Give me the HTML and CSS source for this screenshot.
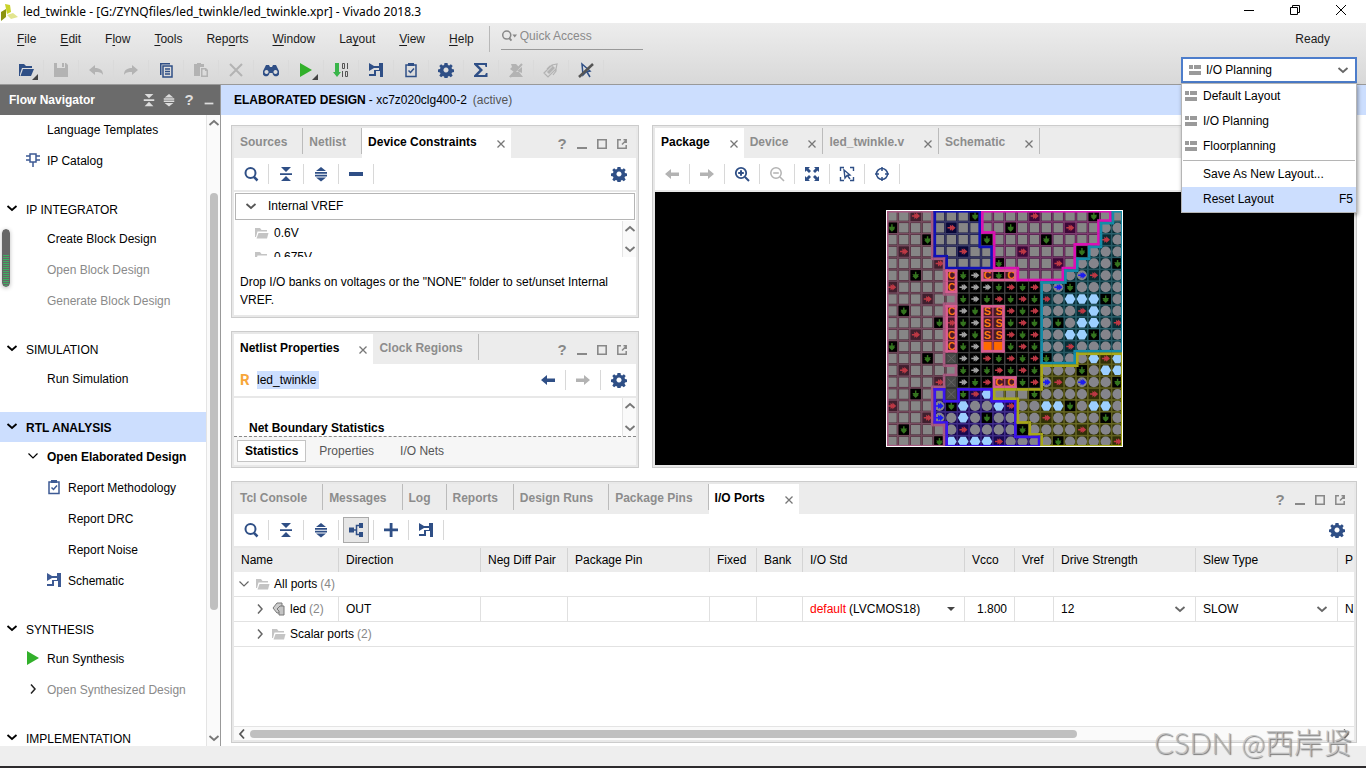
FILE: index.html
```html
<!DOCTYPE html>
<html lang="en">
<head>
<meta charset="utf-8">
<title>led_twinkle - Vivado 2018.3</title>
<link rel="stylesheet" href="styles.css">
</head>
<body>
<svg class="sprite" aria-hidden="true">
  <symbol id="open" viewBox="0 0 16 16"><path d="M1 2h5l2 2h6v2H4L2 12V14H1z"/><path d="M5 7h11l-3 7H2.500z"/></symbol>
  <symbol id="folder" viewBox="0 0 16 16"><path d="M1 3h5l1.500 2H13v1.500H3.500L2 12H1z"/><path d="M4.500 8h10L13 13.500H2.500z"/></symbol>
  <symbol id="save" viewBox="0 0 16 16"><path d="M1 1h3v5h8V1h1l2 2v12H1zM9 1h2v4H9z"/></symbol>
  <symbol id="undo" viewBox="0 0 16 16"><path d="M1 8l6-5v3c5 0 8 2 8 7-2-3-4-3-8-3v3z"/></symbol>
  <symbol id="redo" viewBox="0 0 16 16"><path d="M15 8L9 3v3c-5 0-8 2-8 7 2-3 4-3 8-3v3z"/></symbol>
  <symbol id="copy" viewBox="0 0 16 16"><path d="M2 1h10v1.500H3.500V13H2z"/><path fill="none" stroke="currentColor" stroke-width="1.500" d="M5 4h9v11H5zM7 7h5M7 9.500h5M7 12h5"/></symbol>
  <symbol id="paste" viewBox="0 0 16 16"><path d="M1 2h3V1h4v1h3v3H7v9H1z"/><path d="M8 6h5l2 2v7H8zM9.500 7.500v6h4V9H12V7.500z" fill-rule="evenodd"/></symbol>
  <symbol id="cross" viewBox="0 0 16 16"><path fill="none" stroke="currentColor" stroke-width="2" d="M2 2l12 12M14 2L2 14"/></symbol>
  <symbol id="find" viewBox="0 0 16 16"><path fill-rule="evenodd" d="M3 3h3l1 2h2l1-2h3l3 6a3.500 3.500 0 1 1-6.500 2h-3A3.500 3.500 0 1 1 0 9zM3.500 8a2 2 0 1 0 .01 0zM12.500 8a2 2 0 1 0 .01 0z"/></symbol>
  <symbol id="play" viewBox="0 0 16 16"><path d="M2 1l12 7-12 7z"/></symbol>
  <symbol id="bits" viewBox="0 0 16 16"><path fill="#39b54a" d="M2 1h4v9h2l-4 5-4-5h2z"/><path fill="none" stroke="#555" d="M9.500 1.500h2v5h-2zM14.500 1v6M9.500 9v6M12.500 9.500h2v5h-2z"/></symbol>
  <symbol id="schem" viewBox="0 0 16 16"><path d="M1 1l5 3h5V1h4v14h-3V9H8v5H1v-2h5V8h5V6H6L1 9z"/></symbol>
  <symbol id="clip" viewBox="0 0 16 16"><path fill="none" stroke="currentColor" stroke-width="1.500" d="M3 3h10v11.500H3zM5.500 8.500l2 2 3.500-4"/><path d="M5 1h6v3H5z"/></symbol>
  <symbol id="gear" viewBox="0 0 16 16"><path fill-rule="evenodd" d="M6.500 1h3l.4 2 1.300.500 1.700-1.200 1.800 1.800-1.200 1.700.5 1.300 2 .4v2.500l-2 .5-.5 1.300 1.200 1.700-1.900 1.800-1.700-1.200-1.200.5-.4 1.900h-3l-.4-2-1.300-.500-1.700 1.200-1.800-1.800 1.200-1.700-.5-1.200-2-.5V7.500l2-.5.5-1.200-1.200-1.700 1.800-1.800 1.700 1.200 1.300-.5zM8 5.500a2.500 2.500 0 1 0 .01 0z"/></symbol>
  <symbol id="sigma" viewBox="0 0 16 16"><path d="M1 1h13v4h-1.500L12 3H5l5 5-5 5h7l1-2h1.500v4H1v-1.500L6.500 8 1 2.500z"/></symbol>
  <symbol id="nomark" viewBox="0 0 16 16"><path d="M3 2h5l3 3-5 5-4-3 2-2zM1 15l5-5h5l4 5zM9 9l5-4v6z"/><path stroke="currentColor" stroke-width="2" d="M2 15L14 2"/></symbol>
  <symbol id="noroute" viewBox="0 0 16 16"><path fill="none" stroke="currentColor" stroke-width="1.200" d="M1 11l8-8 5-1-1 5-8 8zM4 7l3-3h3M10 13l3-4v-2"/><path stroke="currentColor" stroke-width="3" d="M5 11l6-6"/></symbol>
  <symbol id="noselect" viewBox="0 0 16 16"><path fill="none" stroke="currentColor" stroke-width="1.500" d="M4 2l8 7-4 1-3 3zM9 10l3 5"/><path stroke="#555" stroke-width="2.500" d="M1 15L15 2"/></symbol>
  <symbol id="search" viewBox="0 0 16 16"><circle cx="7.500" cy="7" r="5" fill="none" stroke="currentColor" stroke-width="2"/><path stroke="currentColor" stroke-width="2.500" d="M11 11l3.500 3.500"/></symbol>
  <symbol id="collapse" viewBox="0 0 16 16"><path d="M3 1h10L8 6zM2 7.200h12v1.800H2zM8 10l5 5H3z"/></symbol>
  <symbol id="expand" viewBox="0 0 16 16"><path d="M8 1l5 4H3zM2 6h12v1.700H2zM2 8.700h12v1.700H2zM3 11.500h10l-5 4z"/></symbol>
  <symbol id="minus" viewBox="0 0 16 16"><path d="M1 6h14v4H1z"/></symbol>
  <symbol id="plus" viewBox="0 0 16 16"><path d="M6.700 1h2.800v5.500H15v2.800H9.500V15H6.700V9.300H1V6.500h5.700z"/></symbol>
  <symbol id="left" viewBox="0 0 16 16"><path d="M1 8l6-5v3.500h8v3.500H7v3z"/></symbol>
  <symbol id="right" viewBox="0 0 16 16"><path d="M15 8L9 3v3.500H1V10h8v3z"/></symbol>
  <symbol id="zin" viewBox="0 0 16 16"><circle cx="7" cy="7" r="5.200" fill="none" stroke="currentColor" stroke-width="1.800"/><path stroke="currentColor" stroke-width="2" d="M11 11l4 4M7 4.200v5.600M4.200 7h5.600"/></symbol>
  <symbol id="zout" viewBox="0 0 16 16"><circle cx="7" cy="7" r="5.200" fill="none" stroke="currentColor" stroke-width="1.500"/><path stroke="currentColor" stroke-width="1.600" d="M11 11l4 4M4.200 7h5.600"/></symbol>
  <symbol id="fit" viewBox="0 0 16 16"><path d="M1 1h5L4.500 2.500 7 5 5 7 2.500 4.500 1 6zM15 1v5l-1.500-1.500L11 7 9 5l2.500-2.500L10 1zM1 15v-5l1.500 1.500L5 9l2 2-2.500 2.500L6 15zM15 15h-5l1.500-1.500L9 11l2-2 2.500 2.500L15 10z"/></symbol>
  <symbol id="zsel" viewBox="0 0 16 16"><path fill="none" stroke="currentColor" stroke-width="1.400" d="M1.500 5V1.500H5M11 1.500h3.500V5M14.500 11v3.500H11M5 14.500H1.500V11M5 4l6 5-3 .5L6 12zM8 9l3 4"/></symbol>
  <symbol id="target" viewBox="0 0 16 16"><circle cx="8" cy="8" r="5.500" fill="none" stroke="currentColor" stroke-width="1.500"/><path stroke="currentColor" stroke-width="1.500" d="M8 1v4M8 11v4M1 8h4M11 8h4"/></symbol>
  <symbol id="tree" viewBox="0 0 16 16"><path d="M1 5.500h5v5H1zM11 1h4v5h-4zM11 10h4v5h-4z"/><path fill="none" stroke="currentColor" stroke-width="1.500" d="M8.500 8V3.500H11M8.500 8v4.500H11M6 8h2.500"/></symbol>
  <symbol id="chip" viewBox="0 0 16 16"><path fill="none" stroke="currentColor" stroke-width="1.500" d="M5 2h6v8H5zM1 4h4M1 8h4M11 4h4M11 8h4M8 10v5"/></symbol>
  <symbol id="down" viewBox="0 0 16 16"><path fill="none" stroke="currentColor" stroke-width="1.800" d="M3.500 6L8 10l4.500-4"/></symbol>
  <symbol id="thin" viewBox="0 0 16 16"><path fill="none" stroke="currentColor" stroke-width="1.200" d="M3.500 5.500L8 10l4.500-4.500"/></symbol>
  <symbol id="up" viewBox="0 0 16 16"><path fill="none" stroke="currentColor" stroke-width="1.800" d="M3.500 10L8 6l4.500 4"/></symbol>
  <symbol id="next" viewBox="0 0 16 16"><path fill="none" stroke="currentColor" stroke-width="1.500" d="M6 3.500L10 8l-4 4.500"/></symbol>
  <symbol id="prev" viewBox="0 0 16 16"><path fill="none" stroke="currentColor" stroke-width="1.800" d="M10 3.500L6 8l4 4.500"/></symbol>
  <symbol id="close" viewBox="0 0 16 16"><path fill="none" stroke="currentColor" stroke-width="1.300" d="M4.500 4.500l7 7M11.500 4.500l-7 7"/></symbol>
  <symbol id="min" viewBox="0 0 16 16"><path d="M3 11h10v2H3z"/></symbol>
  <symbol id="max" viewBox="0 0 16 16"><path fill="none" stroke="currentColor" stroke-width="1.600" d="M3.800 3.800h8.400v8.400H3.800z"/></symbol>
  <symbol id="pop" viewBox="0 0 16 16"><path fill="none" stroke="currentColor" stroke-width="1.500" d="M7 3.800H3.800v8.400h8.400V9M8 8.500L12 4.500M9.500 3.800h2.700V7"/></symbol>
  <symbol id="layout" viewBox="0 0 16 16"><path d="M2 3h4v4H2zM7 3h7v4H7zM2 9h12v4H2z"/></symbol>
  <symbol id="port" viewBox="0 0 16 16"><path fill="#ccc" stroke="#777" d="M2 7l4-5h5v10H6z"/><path fill="#c4c4c4" stroke="#777" d="M6 8l3-3h4v9H8V10z"/></symbol>
</svg>

<div class="app">
  <header class="title">
    <svg class="logo" viewBox="0 0 18 18"><path fill="#c9d22a" d="M5 1l5 1 1 7-4 2z"/><path fill="#8c9410" d="M1 9l5-3v8l-5 4z"/><path fill="#e2e58f" d="M7 12l6-2 5 4-7 2z"/></svg>
    <h1>led_twinkle - [G:/ZYNQfiles/led_twinkle/led_twinkle.xpr] - Vivado 2018.3</h1>
    <div class="wincontrols">
      <button aria-label="Minimize"><svg viewBox="0 0 16 16"><path d="M3 8.500h10"/></svg></button>
      <button aria-label="Restore"><svg viewBox="0 0 16 16"><path d="M3.500 5.500h7v7h-7zM5.500 5.500v-2h7v7h-2"/></svg></button>
      <button aria-label="Close"><svg viewBox="0 0 16 16"><path d="M3 3l10 10M13 3L3 13"/></svg></button>
    </div>
  </header>

  <div class="ribbon">
    <div class="menurow">
      <nav class="menubar">
        <button><u>F</u>ile</button><button><u>E</u>dit</button><button>F<u>l</u>ow</button><button><u>T</u>ools</button><button>Rep<u>o</u>rts</button><button><u>W</u>indow</button><button>La<u>y</u>out</button><button><u>V</u>iew</button><button><u>H</u>elp</button>
      </nav>
      <label class="quick"><svg viewBox="0 0 20 16"><circle cx="6" cy="7.500" r="4.300" fill="none" stroke="#888" stroke-width="1.600"/><path stroke="#888" stroke-width="2" d="M8.500 10.500l2.500 3"/><path fill="#888" d="M12 7h5l-2.500 3z"/></svg><input type="text" placeholder="Quick Access" aria-label="Quick Access"></label>
      <span class="ready">Ready</span>
    </div>
    <div class="toolrow">
      <button class="more" aria-label="Open"><svg><use href="#open"/></svg></button>
      <button disabled aria-label="Save"><svg><use href="#save"/></svg></button>
      <button disabled aria-label="Undo"><svg><use href="#undo"/></svg></button>
      <button disabled aria-label="Redo"><svg><use href="#redo"/></svg></button>
      <button aria-label="Copy"><svg><use href="#copy"/></svg></button>
      <button disabled aria-label="Paste"><svg><use href="#paste"/></svg></button>
      <button disabled aria-label="Delete"><svg><use href="#cross"/></svg></button>
      <button aria-label="Find"><svg><use href="#find"/></svg></button>
      <button class="more go" aria-label="Run"><svg><use href="#play"/></svg></button>
      <button aria-label="Generate Bitstream"><svg><use href="#bits"/></svg></button>
      <button aria-label="Schematic"><svg><use href="#schem"/></svg></button>
      <button aria-label="Report"><svg><use href="#clip"/></svg></button>
      <button aria-label="Settings"><svg><use href="#gear"/></svg></button>
      <button aria-label="Summary"><svg><use href="#sigma"/></svg></button>
      <button disabled aria-label="Unmark"><svg><use href="#nomark"/></svg></button>
      <button disabled aria-label="Unroute"><svg><use href="#noroute"/></svg></button>
      <button aria-label="Unselect"><svg><use href="#noselect"/></svg></button>
      <div class="combo">
        <svg><use href="#layout"/></svg>
        <select aria-label="Layout"><option>I/O Planning</option><option>Default Layout</option><option>Floorplanning</option></select>
        <svg><use href="#down"/></svg>
        <div class="menu">
          <button><svg><use href="#layout"/></svg>Default Layout</button>
          <button><svg><use href="#layout"/></svg>I/O Planning</button>
          <button><svg><use href="#layout"/></svg>Floorplanning</button>
          <hr>
          <button><svg></svg>Save As New Layout...</button>
          <button class="hot"><svg></svg>Reset Layout<kbd>F5</kbd></button>
        </div>
      </div>
    </div>
  </div>

  <div class="work">
    <aside class="flow">
      <div class="flowhead"><h2>Flow Navigator</h2>
        <div class="ctl"><button aria-label="Collapse all"><svg><use href="#collapse"/></svg></button><button aria-label="Expand all"><svg><use href="#expand"/></svg></button><button aria-label="Help">?</button><button aria-label="Minimize"><svg><use href="#min"/></svg></button></div>
      </div>
      <div class="flowbody">
        <nav class="steps">
          <section>
            <button class="i1">Language Templates</button>
            <button class="i1"><svg class="blue"><use href="#chip"/></svg>IP Catalog</button>
          </section>
          <section>
            <h3><svg><use href="#down"/></svg>IP INTEGRATOR</h3>
            <button class="i1">Create Block Design</button>
            <button class="i1" disabled>Open Block Design</button>
            <button class="i1" disabled>Generate Block Design</button>
          </section>
          <section>
            <h3><svg><use href="#down"/></svg>SIMULATION</h3>
            <button class="i1">Run Simulation</button>
          </section>
          <section>
            <h3 class="current"><svg><use href="#down"/></svg>RTL ANALYSIS</h3>
            <button class="i1 strong"><svg><use href="#thin"/></svg>Open Elaborated Design</button>
            <button class="i2"><svg class="blue"><use href="#clip"/></svg>Report Methodology</button>
            <button class="i2">Report DRC</button>
            <button class="i2">Report Noise</button>
            <button class="i2"><svg class="blue"><use href="#schem"/></svg>Schematic</button>
          </section>
          <section>
            <h3><svg><use href="#down"/></svg>SYNTHESIS</h3>
            <button class="i1"><svg class="green"><use href="#play"/></svg>Run Synthesis</button>
            <button class="i1" disabled><svg class="dark"><use href="#next"/></svg>Open Synthesized Design</button>
          </section>
          <section>
            <h3><svg><use href="#down"/></svg>IMPLEMENTATION</h3>
          </section>
        </nav>
        <div class="vbar"><svg><use href="#up"/></svg><i></i><svg><use href="#down"/></svg></div>
        <div class="meter"></div>
      </div>
    </aside>

    <main>
      <div class="designbar"><h2>ELABORATED DESIGN</h2><span>- xc7z020clg400-2</span><em>(active)</em></div>
      <div class="panes">
        <div class="toppanes">
          <div class="leftpanes">
            <section class="pane grow">
              <div class="tabs">
                <button>Sources</button><button>Netlist</button><button class="on">Device Constraints<svg><use href="#close"/></svg></button>
                <div class="ctl"><button aria-label="Help">?</button><button aria-label="Minimize"><svg><use href="#min"/></svg></button><button aria-label="Maximize"><svg><use href="#max"/></svg></button><button aria-label="Float"><svg><use href="#pop"/></svg></button></div>
              </div>
              <div class="tools">
                <button aria-label="Search"><svg><use href="#search"/></svg></button><button aria-label="Collapse all"><svg><use href="#collapse"/></svg></button><button aria-label="Expand all"><svg><use href="#expand"/></svg></button><button aria-label="Remove"><svg><use href="#minus"/></svg></button>
                <button class="end" aria-label="Settings"><svg><use href="#gear"/></svg></button>
              </div>
              <button class="vref"><svg><use href="#down"/></svg>Internal VREF</button>
              <div class="scroller volts">
                <ul><li><svg><use href="#folder"/></svg>0.6V</li><li><svg><use href="#folder"/></svg>0.675V</li></ul>
                <div class="vbar"><svg><use href="#up"/></svg><svg><use href="#down"/></svg></div>
              </div>
              <p>Drop I/O banks on voltages or the "NONE" folder to set/unset Internal VREF.</p>
            </section>
            <section class="pane">
              <div class="tabs">
                <button class="on">Netlist Properties<svg><use href="#close"/></svg></button><button>Clock Regions</button>
                <div class="ctl"><button aria-label="Help">?</button><button aria-label="Minimize"><svg><use href="#min"/></svg></button><button aria-label="Maximize"><svg><use href="#max"/></svg></button><button aria-label="Float"><svg><use href="#pop"/></svg></button></div>
              </div>
              <div class="tools">
                <b class="rtl">R</b><mark>led_twinkle</mark>
                <button class="end" aria-label="Back"><svg><use href="#left"/></svg></button><button disabled aria-label="Forward"><svg><use href="#right"/></svg></button><button aria-label="Settings"><svg><use href="#gear"/></svg></button>
              </div>
              <div class="scroller stats">
                <h3>Net Boundary Statistics</h3>
                <div class="vbar"><svg><use href="#up"/></svg><svg><use href="#down"/></svg></div>
              </div>
              <div class="subtabs"><button class="on">Statistics</button><button>Properties</button><button>I/O Nets</button></div>
            </section>
          </div>
          <section class="pane">
            <div class="tabs">
              <button class="on">Package<svg><use href="#close"/></svg></button><button>Device<svg><use href="#close"/></svg></button><button>led_twinkle.v<svg><use href="#close"/></svg></button><button>Schematic<svg><use href="#close"/></svg></button>
            </div>
            <div class="tools">
              <button disabled aria-label="Back"><svg><use href="#left"/></svg></button><button disabled aria-label="Forward"><svg><use href="#right"/></svg></button><button aria-label="Zoom in"><svg><use href="#zin"/></svg></button><button disabled aria-label="Zoom out"><svg><use href="#zout"/></svg></button><button aria-label="Zoom fit"><svg><use href="#fit"/></svg></button><button aria-label="Zoom to selection"><svg><use href="#zsel"/></svg></button><button aria-label="Autofit"><svg><use href="#target"/></svg></button>
            </div>
            <div class="canvas"><svg id="package" viewBox="0 0 20 20" role="img" aria-label="Package pin map"></svg></div>
          </section>
        </div>

        <section class="pane">
          <div class="tabs">
            <button>Tcl Console</button><button>Messages</button><button>Log</button><button>Reports</button><button>Design Runs</button><button>Package Pins</button><button class="on">I/O Ports<svg><use href="#close"/></svg></button>
            <div class="ctl"><button aria-label="Help">?</button><button aria-label="Minimize"><svg><use href="#min"/></svg></button><button aria-label="Maximize"><svg><use href="#max"/></svg></button><button aria-label="Float"><svg><use href="#pop"/></svg></button></div>
          </div>
          <div class="tools">
            <button aria-label="Search"><svg><use href="#search"/></svg></button><button aria-label="Collapse all"><svg><use href="#collapse"/></svg></button><button aria-label="Expand all"><svg><use href="#expand"/></svg></button><button class="pressed" aria-label="Group by interface"><svg><use href="#tree"/></svg></button><button aria-label="Add"><svg><use href="#plus"/></svg></button><button aria-label="Schematic"><svg><use href="#schem"/></svg></button>
            <button class="end" aria-label="Settings"><svg><use href="#gear"/></svg></button>
          </div>
          <div class="ports">
            <table>
              <colgroup><col class="w-name"><col class="w-wide"><col class="w-neg"><col class="w-wide"><col class="w-fixed"><col class="w-bank"><col class="w-std"><col class="w-vcco"><col class="w-vref"><col class="w-wide"><col class="w-wide"><col class="w-wide"></colgroup>
              <thead><tr><th>Name</th><th>Direction</th><th>Neg Diff Pair</th><th>Package Pin</th><th>Fixed</th><th>Bank</th><th>I/O Std</th><th>Vcco</th><th>Vref</th><th>Drive Strength</th><th>Slew Type</th><th>P</th></tr></thead>
              <tbody>
                <tr class="group"><td colspan="12"><div class="cell"><svg><use href="#thin"/></svg><svg class="pale"><use href="#folder"/></svg>All ports <small>(4)</small></div></td></tr>
                <tr><td><div class="cell sub"><svg><use href="#next"/></svg><svg><use href="#port"/></svg>led <small>(2)</small></div></td><td>OUT</td><td></td><td></td><td></td><td></td><td><button class="std"><span>default</span> (LVCMOS18)<i></i></button></td><td class="num">1.800</td><td></td>
                  <td><div class="pick"><select aria-label="Drive Strength"><option>12</option></select><svg><use href="#down"/></svg></div></td><td><div class="pick"><select aria-label="Slew Type"><option>SLOW</option></select><svg><use href="#down"/></svg></div></td><td>N</td></tr>
                <tr class="group"><td colspan="12"><div class="cell sub"><svg><use href="#next"/></svg><svg class="pale"><use href="#folder"/></svg>Scalar ports <small>(2)</small></div></td></tr>
              </tbody>
            </table>
          </div>
          <div class="hbar"><svg><use href="#prev"/></svg><div><i></i></div><svg><use href="#next"/></svg></div>
        </section>
      </div>
    </main>
  </div>
  <footer class="status"></footer>
  <div class="watermark">CSDN @西岸贤</div>
</div>
<script src="package.js"></script>
</body>
</html>
```

FILE: styles.css
```css
* { box-sizing: border-box; }
body { margin: 0; color: #000; background: #fff; font: 12px/16px "Liberation Sans", Arial, sans-serif; }
button, input, select { font: inherit; color: inherit; background: none; border: 0; padding: 0; margin: 0; border-radius: 0; text-align: left; white-space: nowrap; }
h1, h2, h3, p, ul { margin: 0; padding: 0; font-size: 12px; list-style: none; }
svg { width: 16px; height: 16px; fill: currentColor; flex: none; display: block; }
.sprite { position: absolute; width: 0; height: 0; }

.app { height: 100vh; display: flex; flex-direction: column; position: relative; overflow: hidden; border-bottom: 2px solid #2d2b2d; }

.title { display: flex; align-items: center; height: 23px; background: #fff; flex: none; }
.title .logo { width: 18px; height: 18px; }
.title h1 { font: 12px/22px "Noto Sans", "Open Sans", sans-serif; padding-left: 5px; flex: 1; }
.wincontrols { display: flex; padding-right: 2px; }
.wincontrols button { width: 46px; display: flex; justify-content: center; padding-bottom: 3px; }
.wincontrols svg { fill: none; stroke: #000; }

.ribbon { background: linear-gradient(#ededed, #d8d8d8); border-bottom: 1px solid #999; height: 62px; flex: none; color: #1b1b1b; }
.menurow { display: flex; height: 32px; align-items: center; }
.menubar { display: flex; gap: 24px; padding: 0 15px 0 17px; height: 26px; align-items: center; border-right: 1px solid #b8b8b8; }
.menubar u { text-underline-offset: 2px; }
.quick { display: flex; align-items: center; width: 142px; height: 23px; margin-left: 11px; margin-bottom: 2px; border-bottom: 1px solid #999; padding-bottom: 4px; }
.quick svg { width: 19px; height: 15px; }
.quick input { flex: 1; min-width: 0; outline: 0; }
.quick input::placeholder { color: #8a8a8a; opacity: 1; }
.ready { margin-left: auto; padding-right: 36px; }
.toolrow { display: flex; height: 29px; align-items: center; padding: 0 9px; color: #2f4f86; }
.toolrow > button { width: 35px; height: 20px; display: flex; align-items: center; justify-content: center; border-right: 1px solid #dadada; position: relative; }
button:disabled, .toolrow > button:disabled { color: #b3b3b3; }
.toolrow > .go { color: #32b02b; }
.more::after { content: ""; position: absolute; right: 5px; bottom: 0; border: 3px solid; border-color: transparent #444 #444 transparent; }
.combo { margin-left: auto; width: 176px; height: 26px; display: flex; align-items: center; border: 2px solid #4d7dcb; background: #fff; position: relative; padding: 0 4px; color: #9a9a9a; z-index: 5; }
.combo > svg:last-of-type { color: #666; }
.combo select { appearance: none; flex: 1; height: 20px; color: #000; padding-left: 3px; outline: 0; }
.menu { position: absolute; left: -2px; right: -2px; top: 24px; background: #fff; border: 1px solid #b5b5b5; box-shadow: 1px 2px 4px #0006; color: #000; }
.menu button { display: flex; align-items: center; width: 100%; height: 25px; padding: 0 3px 0 1px; gap: 4px; }
.menu svg { color: #9a9a9a; }
.menu hr { margin: 1px 1px; border: 0; border-top: 1px solid #b5b5b5; }
.menu .hot { background: #ccdefe; }
.menu kbd { margin-left: auto; font: inherit; }

.work { flex: 1; min-height: 0; display: flex; }
.flow { width: 221px; flex: none; border-right: 1px solid #999; display: flex; flex-direction: column; }
.flowhead { height: 30px; flex: none; background: #6b6b6b; color: #fff; display: flex; align-items: center; padding-left: 9px; }
.ctl { margin-left: auto; display: flex; align-items: center; color: #888; padding-right: 4px; }
.ctl button { width: 20px; display: flex; justify-content: center; font: bold 15px/16px "Liberation Sans", Arial, sans-serif; }
.flowhead .ctl { color: #ddd; padding-right: 1px; }
.flowhead .ctl svg { width: 14px; height: 14px; }
.flowbody { flex: 1; min-height: 0; display: flex; position: relative; }
.steps { flex: 1; overflow: hidden; }
.steps section { margin-bottom: 17px; }
.steps h3 { display: flex; align-items: center; height: 30px; gap: 6px; padding: 2px 0 0 4px; font-weight: normal; }
.steps h3 svg { margin-bottom: 5px; }
.steps .current { background: #ccdefe; font-weight: bold; }
.steps button { display: flex; align-items: center; height: 31px; width: 100%; padding: 0 0 2px 47px; }
.steps .i2 { padding-left: 68px; }
.steps .strong { font-weight: bold; }
.steps button:disabled { color: #8a8a8a; }
.steps button svg { margin: 0 6px 2px -22px; }
.blue { color: #3d5a94; }
.green { color: #32b02b; }
.dark { color: #222; }
.vbar { width: 14px; flex: none; display: flex; flex-direction: column; justify-content: space-between; align-items: center; background: #fafafa; border-left: 1px solid #e4e4e4; color: #777; }
.flow .vbar i { width: 8px; flex: none; height: 66%; border-radius: 4px; background: #c0c0c0; margin-bottom: 58px; }
.meter { position: absolute; left: 2px; top: 114px; width: 8px; height: 58px; border: 1px solid #666; border-radius: 4px; background: linear-gradient(#666 24px, transparent 24px), repeating-linear-gradient(#666 0 1px, #3fae63 1px 2px); box-shadow: 0 1px 4px #0004; }

main { flex: 1; min-width: 0; display: flex; flex-direction: column; }
.designbar { height: 30px; flex: none; background: #ccdefe; display: flex; align-items: center; padding-left: 13px; gap: 3px; }
.designbar h2 { font-size: 12px; }
.designbar em { font-style: normal; color: #555; margin-left: 3px; }
.panes { flex: 1; min-height: 0; padding: 10px 9px 3px 10px; display: grid; gap: 13px; grid-template-rows: minmax(0, 343fr) minmax(0, 262fr); grid-template-columns: minmax(0, 1fr); }
.toppanes { display: grid; gap: 13px; grid-template-columns: minmax(0, 408fr) minmax(0, 705fr); min-height: 0; }
.leftpanes { display: flex; flex-direction: column; gap: 13px; min-height: 0; }
.pane { border: 1px solid #ccc; box-shadow: inset 0 0 0 2px #e8e8e8; padding: 2px; display: flex; flex-direction: column; min-height: 0; min-width: 0; }
.grow { flex: 1; }
.tabs { display: flex; align-items: flex-start; background: #ececec; height: 30px; flex: none; color: #8c8c8c; font-weight: bold; }
.tabs > button { height: 26px; padding: 1px 15px 0 6px; border-right: 1px solid #bbb; display: flex; align-items: center; }
.tabs > button svg { margin: 4px -13px 0 16px; color: #777; }
.tabs > .on { height: 30px; background: #fff; color: #000; border: 0; padding: 0 15px 3px 6px; }
.tabs .ctl { height: 32px; }
.tools { display: flex; align-items: center; height: 34px; flex: none; border-bottom: 2px solid #e8e8e8; color: #2f4f86; }
.tools button { width: 35px; height: 20px; display: flex; align-items: center; justify-content: center; border-right: 1px solid #d8d8d8; }
.rtl ~ button:last-child, .tools .end:last-child { border-right: 0; }
.tools .end { margin-left: auto; }
.tools .pressed svg { background: #e6e6e6; outline: 1px solid #aaa; padding: 4px; width: 24px; height: 24px; }
.rtl { color: #f7a63a; font: bold 15px/16px Roboto, sans-serif; width: 23px; padding-left: 6px; }
.tools mark { background: #ccdefe; color: #000; line-height: 18px; padding-right: 3px; }
.vref { display: flex; align-items: center; gap: 9px; height: 27px; flex: none; margin: 1px; padding: 0 0 2px 7px; border: 1px solid #b5b5b5; }
.vref svg { color: #555; }
.scroller { display: flex; overflow: hidden; flex: none; }
.scroller ul { flex: 1; }
.scroller li { display: flex; align-items: center; height: 24px; gap: 4px; padding-left: 20px; }
.scroller li svg { color: #c4c4c4; }
.volts { height: 36px; }
.pane p { padding: 16px 18px 7px 6px; line-height: 18px; }
.stats { height: 38px; }
.stats h3 { flex: 1; padding: 22px 0 0 15px; }
.subtabs { display: flex; align-items: center; gap: 1px; height: 29px; flex: none; border-top: 1px dashed #888; background: #f6f6f6; padding: 0 3px 1px; color: #555; }
.subtabs button { height: 22px; padding: 0 12px; }
.subtabs .on { border: 1px solid #c4c4c4; background: #fff; color: #000; font-weight: bold; padding: 0 7px; }
.subtabs button:last-child { padding-left: 13px; }
.canvas { flex: 1; min-height: 0; background: #000; display: flex; justify-content: center; align-items: center; }
#package { height: 87%; width: auto; aspect-ratio: 1; outline: 1px solid #fff; outline-offset: -1px; }
.ports { flex: 1; min-height: 0; overflow: hidden; }
table { border-collapse: separate; border-spacing: 0; table-layout: fixed; width: 1246px; }
th, td { font-weight: normal; text-align: left; padding: 0 7px; border-right: 1px solid #e0e0e0; overflow: hidden; white-space: nowrap; }
th { background: #ececec; height: 24px; border-color: #d4d4d4; padding-right: 0; }
td { height: 25px; border-bottom: 1px solid #e2e2e2; }
.group td, td:first-child { padding-left: 0; padding-right: 0; }
.num { text-align: right; }
.w-name { width: 105px; } .w-wide { width: 142px; } .w-neg { width: 87px; } .w-fixed { width: 47px; } .w-bank { width: 46px; } .w-std { width: 162px; } .w-vcco { width: 50px; } .w-vref { width: 39px; }
.cell { display: flex; align-items: center; gap: 3px; padding-left: 2px; }
.cell svg { color: #666; }
.cell .pale { color: #c4c4c4; }
.sub { padding-left: 18px; }
small { font-size: 12px; color: #888; }
.std { width: 100%; display: flex; align-items: center; gap: 3px; }
.std span { color: #f00; }
.std i { margin-left: auto; border: 4px solid transparent; border-top-color: #444; border-bottom: 0; margin-right: 2px; }
.pick { display: flex; align-items: center; }
.pick select { appearance: none; flex: 1; }
.pick svg { color: #666; }
.hbar { height: 14px; flex: none; display: flex; align-items: center; background: #fafafa; border-top: 1px solid #e4e4e4; color: #555; }
.hbar div { flex: 1; }
.hbar i { display: block; width: 76%; height: 8px; border-radius: 4px; background: #c0c0c0; }
.status { height: 20px; flex: none; background: #eee; }
.watermark { position: absolute; right: 14px; bottom: 3px; font: 300 29px/40px Lato, "Noto Sans CJK SC", sans-serif; color: #bbbc; text-shadow: 1px 1px 1px #777; }
```

FILE: package.js
```js
// One character per pin: g pad, o ball, h clock pin, G ground, R supply, W aux, b VREF, X unbonded, C/S/O config.
const pins = [
  'ggRggggGggggRggggGgg', 'GggggRggggGggggRggoo', 'gggGggggGggggGggggRo', 'gRggggRggggRggggGooo',
  'ggggRggggGggggRgoooG', 'ggGggCGWCGCggggobRoo', 'RggggCWWWGRGRobGoooo', 'gggRggGWGRGRGRohhhGo',
  'gGgggCWGSSRGRoooRhoo', 'ggggGRGWSSGRGoGohhoR', 'ggRggCWGSSRGRoohhGoo', 'GggggCGWOOGRGooRoooo',
  'gggGgXWWRGRGRGooohRh', 'gRggggGWGRGRGoooGohh', 'ggggRXWGRCCGRbRobooG', 'ggGggXGRhgggGooooRoo',
  'RgggbGhoohRoohhGohho', 'gggRbohoGooooRooooGo', 'gGgggoRooooGooooRooo', 'ggggGhhhhRooooGooooR'
];
// I/O bank of each pin; K belongs to no bank.
const banks = [
  'LLLLBBBBMMMMMMMMMMMT', 'LLLLBBBBMMMMMMMMMMTT', 'LLLLBBBBKMMMMMMMMMTT', 'LLLLBBBBBMMMMMMMKTTT',
  'LLLLLBBBBMMMMMMMTTTT', 'LLLLLPKKPPPMMMMTTTTT', 'LLLLLPKKKKKKKTTTTTTT', 'LLLLLLKKKKKKKTTTTTTT',
  'LLLLLPKKPPKKKTTTTTTT', 'LLLLLPKKPPKKKTTTTTTT', 'LLLLLPKKPPKKKTTTTTTT', 'LLLLLPKKPPKKKTTTTTTT',
  'LLLLLKKKKKKKKTTTYYYY', 'LLLLLLKKKKKKKYYYYYYY', 'LLLLLKKKKPPKKYYYYYYY', 'LLLLVKVVVYYYYYYYYYYY',
  'LLLLVVVVVVVYYYYYYYYY', 'LLLLVVVVVVVYYYYYYYYY', 'LLLLLVVVVVVKYYYYYYYY', 'LLLLLVVVVVVVVYYYYYYY'
];
// line, grid, cell fill
const colors = {
  L: ['#a55a80', '#7c5064', '#40202e'], B: ['#1010b8', '#404070', '#080838'], M: ['#dc10b4', '#844074', '#3c0838'],
  T: ['#148ca8', '#2c6470', '#082c34'], Y: ['#a8a818', '#6c6c24', '#303008'], V: ['#3c14f0', '#443090', '#180850'],
  P: ['#d85c90', '#a84870', '#481828'], K: ['', '#444', '#000']
};
const green = '#34741e', red = '#bc3844';
const right = c => `<path fill="${c}" d="M.18.44h.2V.25l.16.12V.22l.32.28-.32.28V.63l-.16.12V.56h-.2z"/>`;
const letter = c => `<text x=".53" y=".82" text-anchor="middle">${c}</text>`;
const glyph = {
  g: '<path fill="#868686" d="M.1.1h.8v.8H.1z"/>',
  o: '<circle cx=".5" cy=".5" r=".43" fill="#85858c"/>',
  h: '<path fill="#9ccfff" d="M.28.1h.44L.95.5.72.9H.28L.05.5z"/>',
  G: `<path fill="#000" d="M.06.06h.88v.88H.06z"/><path fill="${green}" d="M.44.2h.12v.2h.22L.68.55h.1L.5.84.22.55h.1L.22.4h.22z"/>`,
  R: right(red), W: right('#a0a0a0'),
  b: '<circle cx=".5" cy=".5" r=".42" fill="#85858c"/>' + right('#1c1cf0'),
  X: '<path fill="#4a4a4a" d="M.06.06h.88v.88H.06z"/><path stroke="#666" stroke-width=".08" d="M.2.2l.6.6M.8.2l-.6.6"/>',
  C: letter('C'), S: letter('S'), O: '<path fill="#ff6a00" d="M.1.1h.8v.8H.1z"/>'
};
const bank = (r, c) => (banks[r] || '')[c];
const edge = (x, y, w, h, f) => `<rect x="${x}" y="${y}" width="${w}" height="${h}" fill="${f}"/>`;
let cells = '', lines = '';
const t = 0.22;
for (let r = 0; r < 20; r++) for (let c = 0; c < 20; c++) {
  const z = bank(r, c), [line, grid, fill] = colors[z];
  cells += edge(c, r, 1.02, 1.02, grid) + edge(c + 0.06, r + 0.06, 0.88, 0.88, fill)
    + `<g transform="translate(${c} ${r})">${glyph[pins[r][c]]}</g>`;
  if (z === 'K') continue;
  for (const d of [-1, 1]) {
    if (bank(r, c + d) !== z) lines += edge(d < 0 ? c : c + 1 - t, r, t, 1, line);
    if (bank(r + d, c) !== z) lines += edge(c, d < 0 ? r : r + 1 - t, 1, t, line);
    for (const e of [-1, 1]) if (bank(r + d, c) === z && bank(r, c + e) === z && bank(r + d, c + e) !== z)
      lines += edge(e < 0 ? c : c + 1 - t, d < 0 ? r : r + 1 - t, t, t, line);
  }
}
document.getElementById('package').innerHTML =
  `<g font-family="Liberation Sans" font-weight="bold" font-size=".9" fill="#ff7a10">${cells}</g>${lines}`;
```
